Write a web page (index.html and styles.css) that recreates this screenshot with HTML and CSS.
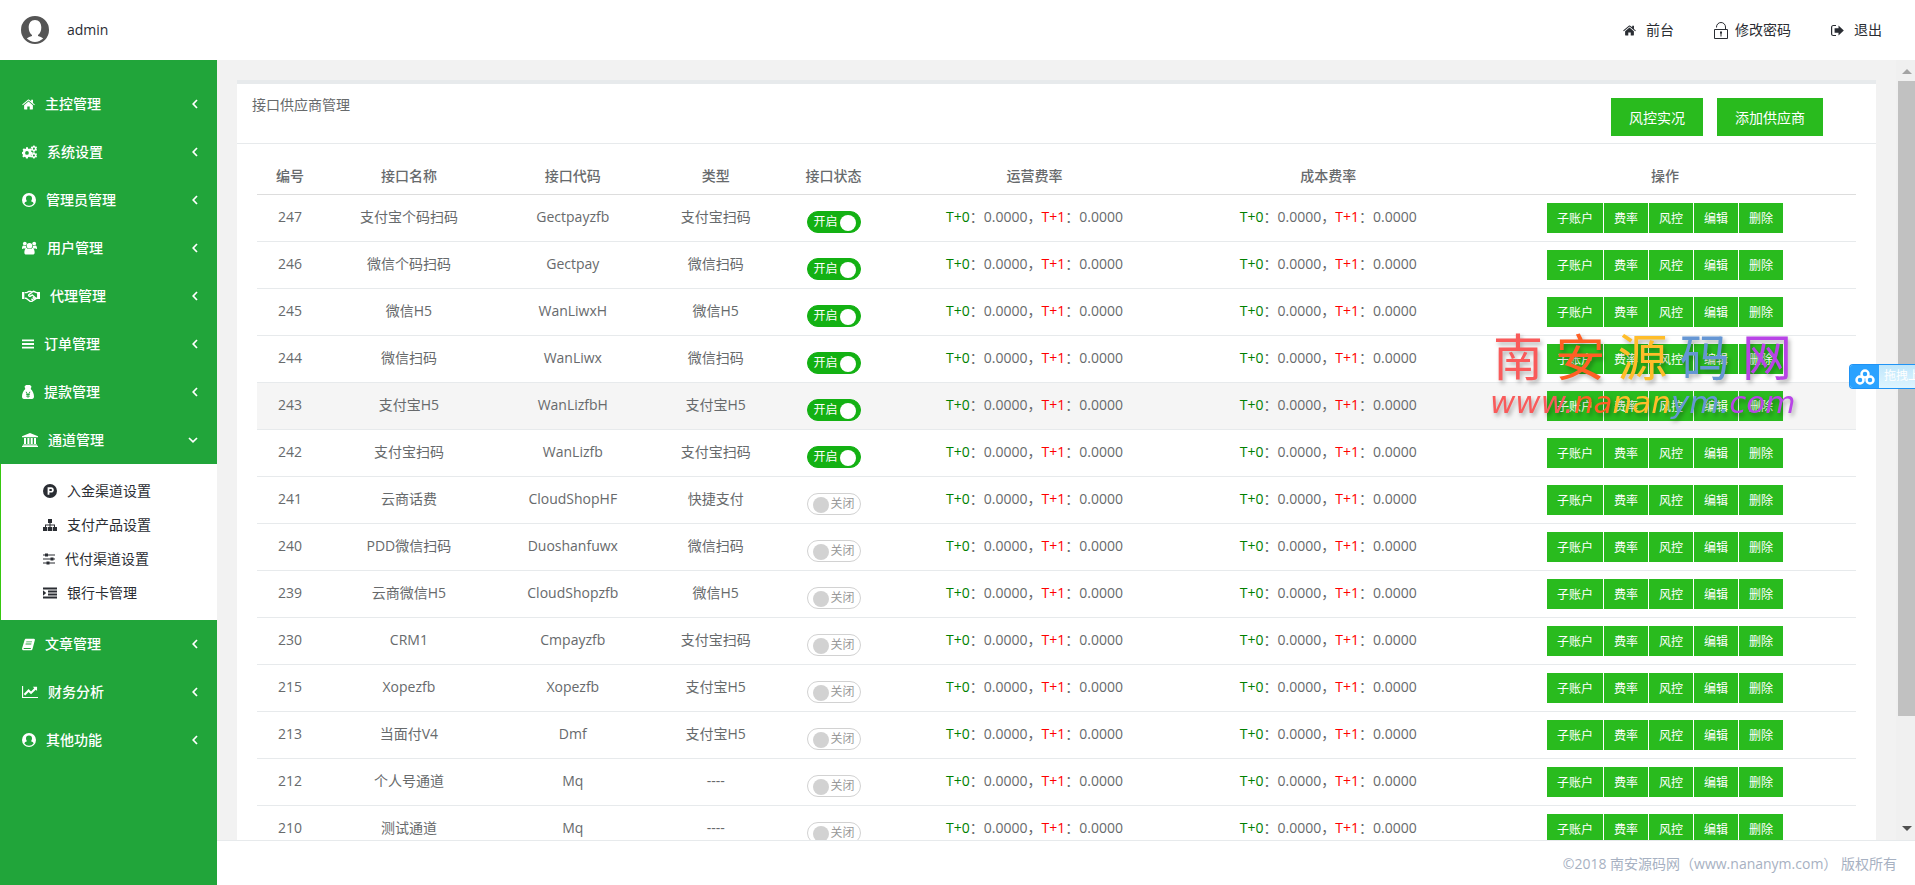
FILE: index.html
```html
<!DOCTYPE html>
<html lang="zh-CN">
<head>
<meta charset="utf-8">
<title>接口供应商管理</title>
<link rel="stylesheet" href="styles.css">
</head>
<body>
<svg class="sprite" aria-hidden="true">
  <symbol id="i-home" viewBox="0 0 16 14"><path d="M8 3.400 2.600 8v4.600c0 .3.2.5.5.5h3.400V9.400h3v3.700h3.400c.3 0 .5-.2.5-.5V8zM15.800 6.900 13.500 5V1.200h-2.200v1.900L8.800 1c-.5-.4-1.100-.4-1.600 0L.2 6.900l.8.900L8 2.100l7 5.700z"/></symbol>
  <symbol id="i-cogs" viewBox="0 0 16 14"><path fill-rule="evenodd" d="M4.300 2h2l.3 1.500.9.400 1.300-.8 1.400 1.400-.8 1.200.4 1 1.400.3v2l-1.500.3-.4.900.8 1.300-1.400 1.400-1.200-.8-1 .4L6.200 14h-2l-.3-1.500-1-.4-1.200.8L.3 11.500l.8-1.300-.4-.9L0 9V7l1-.3.400-1-.8-1.200L2 3.100l1.200.8 1-.4zM5.300 6a2 2 0 1 0 0 4 2 2 0 0 0 0-4z"/><path fill-rule="evenodd" d="M12 0h1.400l.3.900.8.400.9-.2.600 1-.6.800v.9l.6.800-.6 1-.9-.2-.8.400-.3.900H12l-.3-.9-.8-.4-.9.200-.6-1 .6-.8v-.9l-.6-.8.600-1 .9.200.8-.4zm.7 2.300a1.100 1.100 0 1 0 0 2.200 1.100 1.100 0 0 0 0-2.200zM12 7.300h1.400l.3.900.8.400.9-.2.600 1-.6.800v.9l.6.800-.6 1-.9-.2-.8.400-.3.900H12l-.3-.9-.8-.4-.9.200-.6-1 .6-.8v-.9l-.6-.8.600-1 .9.200.8-.4zm.7 2.300a1.100 1.100 0 1 0 0 2.200 1.100 1.100 0 0 0 0-2.200z"/></symbol>
  <symbol id="i-user" viewBox="0 0 14 14"><path fill-rule="evenodd" d="M7 0a7 7 0 1 1 0 14A7 7 0 0 1 7 0zm0 2.500a3 3 0 0 0-3 3.100c0 1.200.500 2.100 1.100 2.600-1.300.1-2.300.9-2.700 2.200A6 6 0 0 0 7 12.800a6 6 0 0 0 4.600-2.400c-.4-1.300-1.400-2.100-2.700-2.200C9.500 7.700 10 6.800 10 5.600a3 3 0 0 0-3-3.100z"/></symbol>
  <symbol id="i-users" viewBox="0 0 16 14"><circle cx="3" cy="2.200" r="2"/><circle cx="13" cy="2.200" r="2"/><circle cx="8" cy="4.600" r="3"/><path d="M0 7.500C0 5.700.7 4.400 1.600 4.400c.8.500 1.900.5 2.700.1-.1 1.200.2 2.300.9 3.100H1.400C.6 8.400 0 8.100 0 7.500zM16 7.500c0-1.800-.7-3.100-1.600-3.100-.8.500-1.900.5-2.700.1.100 1.200-.2 2.300-.9 3.100h3.800c.8.800 1.400.5 1.400-.1zM2.500 11.800c0-2.500.8-4.600 2.700-4.600 1.700 1.300 3.900 1.300 5.600 0 1.900 0 2.700 2.100 2.700 4.600 0 1.400-.8 2.200-2 2.200h-7c-1.200 0-2-.8-2-2.200z"/></symbol>
  <symbol id="i-hands" viewBox="0 0 20 14"><g fill="none" stroke="currentColor" stroke-width="1.500"><path d="M3 3.300h2.500l2-1.300h2l1.500.8 2-1 3 1.500h1.500v6.200h-1.200L11 13H9L4.500 9.500H3M11 3 7.500 5.500c-.8 1.500 1 2.300 2.200 1.400L11.500 6l4.500 4M12 8.500l2 2M10.500 10l1.500 1.500"/></g><path d="M0 2.500h2.600v7.800H0zM17.400 2.500H20v7.800h-2.600z"/></symbol>
  <symbol id="i-bars" viewBox="0 0 13 12"><path d="M0 1h13v2H0zM0 5h13v2H0zM0 9h13v2H0z"/></symbol>
  <symbol id="i-bag" viewBox="0 0 12 14"><path fill-rule="evenodd" d="M4 0h4l1.500 1.500L8.700 4C10.800 6 12 8.600 12 11.500c0 1.600-.7 2.500-2 2.500H2c-1.300 0-2-.9-2-2.500C0 8.600 1.200 6 3.300 4L2.500 1.500zM3.500 6.800l1.500 2.400H4v.7h1.500v.8H4v.7h1.500v1.300h1v-1.300H8v-.7H6.500v-.8H8v-.7H7l1.500-2.400h-1L6 9.200 4.500 6.800z"/></symbol>
  <symbol id="i-bank" viewBox="0 0 16 14"><path d="M8 0l8 3.200v1H0v-1zM2 5h2v6H2zM5.400 5h2v6h-2zM8.700 5h2v6h-2zM12 5h2v6h-2zM1 11.400h14v1H1zM0 12.800h16V14H0z"/></symbol>
  <symbol id="i-p" viewBox="0 0 14 14"><path fill-rule="evenodd" d="M7 0a7 7 0 1 1 0 14A7 7 0 0 1 7 0zM4.600 3.300v7.400h1.800V8.600h1.700c1.800 0 2.700-1.100 2.700-2.600s-.9-2.700-2.700-2.700zm1.800 1.600h1.400c.8 0 1.200.4 1.200 1.100S8.600 7.100 7.800 7.100H6.400z"/></symbol>
  <symbol id="i-tree" viewBox="0 0 14 14"><path d="M5 1h4v4H7.500v1.500H12v2.500h2v4h-4.200V9h1.200V7.500H7.500V9h1.600v4H4.900V9h1.600V7.500H3V9h1.200v4H0V9h2V6.500h4.500V5H5z"/></symbol>
  <symbol id="i-sliders" viewBox="0 0 12 12"><path d="M0 1.500h12v1H0zM0 5.500h12v1H0zM0 9.500h12v1H0zM2 .5h3v3H2zM7.500 4.500h3v3h-3zM3.500 8.500h3v3h-3z"/></symbol>
  <symbol id="i-indent" viewBox="0 0 14 12"><path d="M0 .5h14v2H0zM5 3.500h9v2H5zM5 6.500h9v2H5zM0 9.500h14v2H0zM0 3.300 3.200 6 0 8.700z"/></symbol>
  <symbol id="i-book" viewBox="0 0 14 13"><path fill-rule="evenodd" d="M4.300.3h8.500c.9 0 1.300.7 1 1.600L11.400 11c-.3 1-1 1.700-2 1.700H1.800C.6 12.700-.2 11.700.2 10.300L2.700 2C3 .9 3.500.3 4.300.3zM4.700 3.200l-.3 1h6.200l.3-1zM4 5.400l-.3 1h6.200l.3-1zM1.900 10.200l-.2 1.200h7.600l.4-1.200z"/></symbol>
  <symbol id="i-chart" viewBox="0 0 17 13"><path d="M0 0h1.200v11.800H17V13H0zM11.500 1H16v4.400l-1.400-1.400-5 5L7 6.500l-3.600 3.700-1.600-1.700L7 3.400 9.600 6 13 2.600z"/></symbol>
  <symbol id="i-exit" viewBox="0 0 13 12"><path d="M5 .5v1H2.500c-.8 0-1.300.5-1.300 1.300v6.400c0 .8.500 1.300 1.300 1.300H5v1H2.400C1 11.500 0 10.500 0 9.200V2.800C0 1.500 1 .5 2.400.5zM7.500 1 12.800 6 7.500 11V8.200H3.600V3.800h3.900z"/></symbol>
  <symbol id="i-lock" viewBox="0 0 14 17"><path fill="none" stroke="currentColor" d="M.5 7.500h13v9H.5zM2.500 5.500v-.5a4.500 4.500 0 0 1 9 0v2.500"/><path d="M6 9.500h2v2h-.5v3h-1v-3H6z"/></symbol>
  <symbol id="i-left" viewBox="0 0 6 10"><path fill="none" stroke="currentColor" stroke-width="1.700" d="M5 1 1.200 5 5 9"/></symbol>
  <symbol id="i-down" viewBox="0 0 10 6"><path fill="none" stroke="currentColor" stroke-width="1.700" d="M1 1l4 3.800L9 1"/></symbol>
  <symbol id="i-avatar" viewBox="0 0 28 28"><path fill-rule="evenodd" d="M14 0a14 14 0 1 1 0 28 14 14 0 0 1 0-28zm0 4c-4 0-6.300 3-6.300 7.500 0 3.500 1.300 6.300 3.300 7.500v1c-2 .4-3.800 1.300-5.200 2.600C8 24.500 11 26 14 26s6-1.500 8.200-3.400c-1.400-1.300-3.200-2.200-5.200-2.600v-1c2-1.200 3.300-4 3.300-7.500C20.300 7 18 4 14 4z"/></symbol>
  <symbol id="i-cloud" viewBox="0 0 20 16"><g fill="none" stroke="currentColor" stroke-width="2.500"><circle cx="10" cy="5" r="3.500"/><circle cx="5" cy="11" r="3.500"/><circle cx="15" cy="11" r="3.500"/></g></symbol>
</svg>

<header class="topbar">
  <div class="account"><svg class="avatar"><use href="#i-avatar"/></svg><span>admin</span></div>
  <nav class="toplinks">
    <a href="#"><svg class="w13"><use href="#i-home"/></svg>前台</a>
    <a href="#" class="pwd"><svg class="lock"><use href="#i-lock"/></svg>修改密码</a>
    <a href="#"><svg class="w13"><use href="#i-exit"/></svg>退出</a>
  </nav>
</header>

<div class="shell">
  <nav class="sidebar">
    <a href="#" class="item"><svg class="w13"><use href="#i-home"/></svg>主控管理<svg class="caret"><use href="#i-left"/></svg></a>
    <a href="#" class="item"><svg class="w15"><use href="#i-cogs"/></svg>系统设置<svg class="caret"><use href="#i-left"/></svg></a>
    <a href="#" class="item"><svg class="w14"><use href="#i-user"/></svg>管理员管理<svg class="caret"><use href="#i-left"/></svg></a>
    <a href="#" class="item"><svg class="w15"><use href="#i-users"/></svg>用户管理<svg class="caret"><use href="#i-left"/></svg></a>
    <a href="#" class="item"><svg class="w18"><use href="#i-hands"/></svg>代理管理<svg class="caret"><use href="#i-left"/></svg></a>
    <a href="#" class="item"><svg class="w12"><use href="#i-bars"/></svg>订单管理<svg class="caret"><use href="#i-left"/></svg></a>
    <a href="#" class="item"><svg class="w12"><use href="#i-bag"/></svg>提款管理<svg class="caret"><use href="#i-left"/></svg></a>
    <a href="#" class="item"><svg class="w16"><use href="#i-bank"/></svg>通道管理<svg class="caret open"><use href="#i-down"/></svg></a>
    <div class="submenu">
      <a href="#"><svg class="w14"><use href="#i-p"/></svg>入金渠道设置</a>
      <a href="#"><svg class="w14"><use href="#i-tree"/></svg>支付产品设置</a>
      <a href="#"><svg class="w12"><use href="#i-sliders"/></svg>代付渠道设置</a>
      <a href="#"><svg class="w14"><use href="#i-indent"/></svg>银行卡管理</a>
    </div>
    <a href="#" class="item"><svg class="w13"><use href="#i-book"/></svg>文章管理<svg class="caret"><use href="#i-left"/></svg></a>
    <a href="#" class="item"><svg class="w16"><use href="#i-chart"/></svg>财务分析<svg class="caret"><use href="#i-left"/></svg></a>
    <a href="#" class="item"><svg class="w14"><use href="#i-user"/></svg>其他功能<svg class="caret"><use href="#i-left"/></svg></a>
  </nav>

  <div class="main">
    <div class="viewport">
      <div class="scroll">
        <section class="card">
          <div class="card-head">
            <h1>接口供应商管理</h1>
            <div class="actions"><button type="button">风控实况</button><button type="button">添加供应商</button></div>
          </div>
          <div class="card-body">
            <table class="grid">
              <colgroup><col class="c-id"><col class="c-name"><col class="c-code"><col class="c-type"><col class="c-state"><col class="c-run"><col class="c-cost"><col class="c-ops"></colgroup>
              <thead><tr><th>编号</th><th>接口名称</th><th>接口代码</th><th>类型</th><th>接口状态</th><th>运营费率</th><th>成本费率</th><th>操作</th></tr></thead>
              <tbody id="rows"></tbody>
            </table>
          </div>
        </section>
      </div>
      <div class="scrollbar"><i class="up"></i><i class="thumb"></i><i class="down"></i></div>
    </div>
    <footer class="footer">©2018 南安源码网（www.nananym.com） 版权所有</footer>
  </div>
</div>

<div class="watermark">
  <div class="wm-name"><span class="red">南</span><span class="orange">安</span><span class="yellow">源</span><span class="blue">码</span><span class="purple">网</span></div>
  <div class="wm-url"><span class="red">www.</span><span class="orange">na</span><span class="yellow">nan</span><span class="blue">ym.</span><span class="purple">com</span></div>
</div>
<div class="upload"><span class="upload-icon"><svg><use href="#i-cloud"/></svg></span><span class="upload-text">拖拽上传</span></div>
<script src="app.js"></script>
</body>
</html>
```
FILE: app.js
```js
const data = [
  [247, '支付宝个码扫码', 'Gectpayzfb', '支付宝扫码', 1],
  [246, '微信个码扫码', 'Gectpay', '微信扫码', 1],
  [245, '微信H5', 'WanLiwxH', '微信H5', 1],
  [244, '微信扫码', 'WanLiwx', '微信扫码', 1],
  [243, '支付宝H5', 'WanLizfbH', '支付宝H5', 1],
  [242, '支付宝扫码', 'WanLizfb', '支付宝扫码', 1],
  [241, '云商话费', 'CloudShopHF', '快捷支付', 0],
  [240, 'PDD微信扫码', 'Duoshanfuwx', '微信扫码', 0],
  [239, '云商微信H5', 'CloudShopzfb', '微信H5', 0],
  [230, 'CRM1', 'Cmpayzfb', '支付宝扫码', 0],
  [215, 'Xopezfb', 'Xopezfb', '支付宝H5', 0],
  [213, '当面付V4', 'Dmf', '支付宝H5', 0],
  [212, '个人号通道', 'Mq', '----', 0],
  [210, '测试通道', 'Mq', '----', 0]
];
const rate = '<span class="t0">T+0</span>：0.0000，<span class="t1">T+1</span>：0.0000';
const ops = ['子账户', '费率', '风控', '编辑', '删除'].map(t => `<button type="button">${t}</button>`).join('');
document.getElementById('rows').innerHTML = data.map(([id, name, code, type, on]) => `
  <tr class="${id === 243 ? 'hover' : ''}"><td>${id}</td><td>${name}</td><td>${code}</td><td>${type}</td>
  <td><label class="switch"><input type="checkbox" aria-label="${name}" ${on ? 'checked' : ''}><span>${on ? '开启' : '关闭'}</span></label></td>
  <td>${rate}</td><td>${rate}</td><td><div class="ops">${ops}</div></td></tr>`).join('');
```
FILE: styles.css
```css
* { box-sizing: border-box; }
body {
  margin: 0;
  height: 100vh;
  display: flex;
  flex-direction: column;
  overflow: hidden;
  background: #fff;
  color: #676a6c;
  font: 14px/20px "Open Sans", "Noto Sans CJK SC", sans-serif;
}
a { color: inherit; text-decoration: none; }
button { border: 0; font-family: inherit; cursor: pointer; }
svg { fill: currentColor; flex: none; }
.sprite { position: absolute; width: 0; height: 0; }
.w12 { width: 12px; height: 14px; }
.w13 { width: 13px; height: 13px; }
.w14 { width: 14px; height: 14px; }
.w15 { width: 15px; height: 14px; }
.w16 { width: 16px; height: 14px; }
.w18 { width: 18px; height: 14px; }

.topbar {
  flex: none;
  height: 60px;
  padding: 0 33px 0 21px;
  display: flex;
  align-items: center;
  justify-content: space-between;
  color: #2a2d33;
}
.account { display: flex; align-items: center; gap: 18px; }
.avatar { width: 28px; height: 28px; color: #555; }
.toplinks { display: flex; gap: 40px; }
.toplinks a { display: flex; align-items: center; gap: 10px; }
.toplinks .pwd { gap: 7px; }
.lock { width: 14px; height: 17px; }

.shell { flex: 1; min-height: 0; display: flex; }
.sidebar { flex: none; width: 217px; padding-top: 20px; background: #21a53a; color: #fff; }
.item { display: flex; align-items: center; gap: 10px; height: 48px; padding: 0 19px 0 22px; font-weight: 500; }
.caret { width: 6px; height: 10px; margin-left: auto; }
.caret.open { width: 10px; height: 6px; }
.submenu { padding: 10px 0; background: #fff; border-left: 1px solid #36c70f; color: #2a2d33; }
.submenu a { display: flex; align-items: center; gap: 10px; height: 34px; padding-left: 42px; }

.main { flex: 1; min-width: 0; display: flex; flex-direction: column; }
.viewport { flex: 1; min-height: 0; display: flex; background: #f2f2f2; }
.scroll { flex: 1; min-width: 0; padding: 20px; overflow: hidden; }
.scrollbar { flex: none; width: 19px; padding: 9px 0 9px 2px; background: #f0f0f0; display: flex; flex-direction: column; align-items: center; }
.up { border: 5px solid transparent; border-top: 0; border-bottom-color: #a3a3a3; margin-bottom: 7px; }
.thumb { width: 100%; height: 635px; background: #c1c1c1; }
.down { border: 5px solid transparent; border-bottom: 0; border-top-color: #505050; margin-top: auto; }
.footer { flex: none; height: 45px; padding: 0 18px; border-top: 1px solid #e7eaec; line-height: 46px; text-align: right; color: #a7b1c2; }

.card { background: #fff; border-top: 4px solid #e7eaec; }
.card-head { display: flex; justify-content: space-between; height: 60px; padding: 11px 53px 0 15px; border-bottom: 1px solid #e7eaec; }
.card-head h1 { margin: 0; font-size: 14px; line-height: 20px; font-weight: 400; }
.actions { display: flex; gap: 14px; padding-top: 3px; }
.actions button { height: 38px; padding: 0 18px; background: #29bb1e; color: #fff; font-size: 14px; }
.card-body { padding: 15px 20px; }

.grid { width: 100%; table-layout: fixed; border-collapse: separate; border-spacing: 0; text-align: center; }
.c-id { width: 4.125%; }
.c-name { width: 10.75%; }
.c-code { width: 9.75%; }
.c-type { width: 8.125%; }
.c-state { width: 6.625%; }
.c-run { width: 18.5%; }
.c-cost { width: 18.25%; }
.grid th { height: 36px; padding: 0 0 2px; line-height: 32px; font-weight: 500; border-bottom: 1px solid #ddd; }
.grid td { padding: 8px 0; vertical-align: top; line-height: 28px; border-bottom: 1px solid #e7eaec; }
.hover td { background: #f5f5f5; }
.t0 { color: green; }
.t1 { color: red; }
.ops { display: flex; justify-content: center; gap: 1px; }
.ops button { height: 30px; padding: 0 10px; background: #29bb1e; color: #fff; font-size: 12px; }

.switch { display: flex; align-items: center; width: 54px; height: 22px; margin: 8px auto 0; padding: 0 5px; border: 1px solid #d2d2d2; border-radius: 20px; background: #fff; color: #999; font-size: 12px; line-height: 20px; }
.switch input { appearance: none; flex: none; width: 16px; height: 16px; margin: 2px 2px 0 0; border-radius: 50%; background: #d2d2d2; }
.switch:has(:checked) { flex-direction: row-reverse; justify-content: flex-end; padding: 0 4px 0 6px; border-color: #13b113; background: #13b113; color: #fff; }
.switch input:checked { margin: 2px 0 0 2px; background: #fff; }

.watermark { position: absolute; top: 324px; right: 113px; width: 312px; filter: drop-shadow(2px 3px 2px rgba(0, 0, 0, .3)); }
.wm-name { display: flex; justify-content: space-between; padding: 0 10px 0 3px; font: 400 50px/60px "Noto Sans CJK SC", sans-serif; }
.wm-url { font: italic 31px/36px "DejaVu Sans", sans-serif; white-space: nowrap; }
.red { color: #f95b5b; }
.orange { color: #ff5f25; }
.yellow { color: #ffbd2a; }
.blue { color: #6596d4; }
.purple { color: #b844e6; }

.upload { position: absolute; top: 364px; right: 0; display: flex; width: 66px; height: 25px; overflow: hidden; border: 1px solid #1f93f5; border-right: 0; border-radius: 4px 0 0 4px; background: linear-gradient(#bfe6fb, #def5ff); }
.upload-icon { flex: none; width: 29px; display: flex; align-items: center; justify-content: center; background: #2aa2ff; color: #fff; }
.upload-icon svg { width: 20px; height: 16px; }
.upload-text { padding-left: 5px; color: #fff; font-size: 12px; line-height: 21px; white-space: nowrap; }
```
